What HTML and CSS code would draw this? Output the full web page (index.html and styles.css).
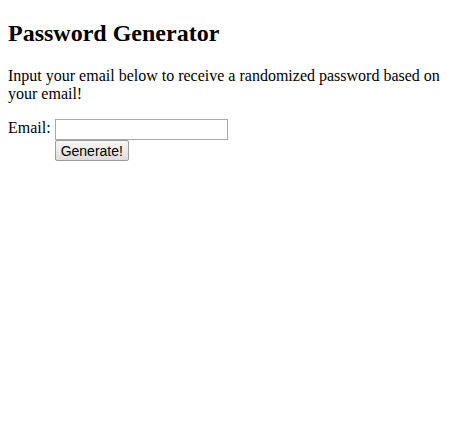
FILE: index.html
```html
<!DOCTYPE html>
<html lang="en">
<head>
    <meta charset="UTF-8">
    <meta name="viewport" content="width=device-width, initial-scale=1.0">
    <title>Password Generator</title>
    <link rel="stylesheet" href="styles.css">
</head>
<body>
    <h1>Password Generator</h1>
    <p>Input your email below to receive a randomized password based on your email!</p>
    <form class="gen-form">
        <label for="email">Email:</label>
        <div class="fields">
            <input type="text" name="email" id="email">
            <button type="button" id="generate">Generate!</button>
        </div>
    </form>
</body>
</html>
```

FILE: styles.css
```css
body
{
    font-family: "Liberation Serif", "Times New Roman", serif;
    font-size: 16px;
    color: #000;
    background: #fff;
}
h1
{
    font-size: 1.5em;
    font-weight: bold;
    margin: 12px 0 20px;
}
.gen-form
{
    display: flex;
    align-items: flex-start;
    gap: 4px;
}
.fields
{
    display: flex;
    flex-direction: column;
    align-items: flex-start;
    gap: 0;
}
input
{
    width: 173px;
    height: 21px;
    box-sizing: border-box;
    border: 1px solid #a9a9a9;
    padding: 1px 2px;
    font-size: 13px;
}
button
{
    height: 21px;
    box-sizing: border-box;
    padding: 0 5px;
    border: 1px solid #9c9c9c;
    border-radius: 2px;
    background: linear-gradient(#f7f7f7, #dddddd);
    font-family: "Liberation Sans", Arial, sans-serif;
    font-size: 14px;
    color: #000;
}
```
